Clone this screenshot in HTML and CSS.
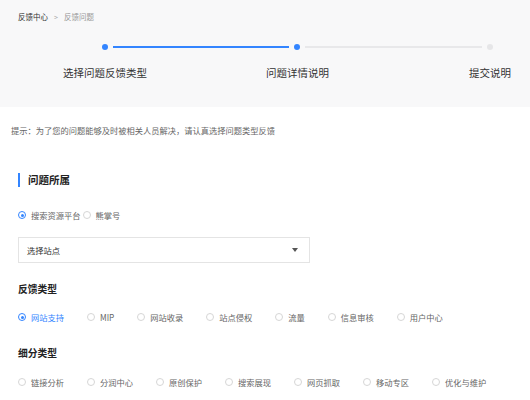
FILE: index.html
```html
<!DOCTYPE html>
<html lang="zh-CN">
<head>
<meta charset="utf-8">
<title>反馈问题</title>
<link rel="stylesheet" href="styles.css">
</head>
<body>
<div class="top">
  <div class="crumbs"><span class="crumb-main">反馈中心</span><span class="crumb-sep">&gt;</span><span class="crumb-cur">反馈问题</span></div>
  <div class="steps">
    <span class="dot dot-on"></span><span class="line line-on"></span><span class="dot dot-on"></span><span class="line"></span><span class="dot"></span>
  </div>
  <div class="step-labels">
    <span>选择问题反馈类型</span><span>问题详情说明</span><span class="step-last">提交说明</span>
  </div>
</div>
<div class="main">
  <div class="hint">提示：为了您的问题能够及时被相关人员解决，请认真选择问题类型反馈</div>
  <div class="section-title">问题所属</div>
  <div class="radios radios-tight">
    <label class="radio checked"><span class="circle"></span>搜索资源平台</label>
    <label class="radio"><span class="circle"></span>熊掌号</label>
  </div>
  <div class="select"><span>选择站点</span><span class="caret"></span></div>
  <div class="sub-title">反馈类型</div>
  <div class="radios">
    <label class="radio checked"><span class="circle"></span>网站支持</label>
    <label class="radio"><span class="circle"></span>MIP</label>
    <label class="radio"><span class="circle"></span>网站收录</label>
    <label class="radio"><span class="circle"></span>站点侵权</label>
    <label class="radio"><span class="circle"></span>流量</label>
    <label class="radio"><span class="circle"></span>信息审核</label>
    <label class="radio"><span class="circle"></span>用户中心</label>
  </div>
  <div class="sub-title sub-title-2">细分类型</div>
  <div class="radios radios-3">
    <label class="radio"><span class="circle"></span>链接分析</label>
    <label class="radio"><span class="circle"></span>分润中心</label>
    <label class="radio"><span class="circle"></span>原创保护</label>
    <label class="radio"><span class="circle"></span>搜索展现</label>
    <label class="radio"><span class="circle"></span>网页抓取</label>
    <label class="radio"><span class="circle"></span>移动专区</label>
    <label class="radio"><span class="circle"></span>优化与维护</label>
  </div>
</div>
</body>
</html>
```
FILE: styles.css
```css
* { box-sizing: border-box; }
html, body { margin: 0; padding: 0; background: #fff; }
body {
  font-family: "Noto Sans CJK SC", "Noto Sans", sans-serif;
  color: #333;
  width: 530px;
  height: 400px;
  overflow: hidden;
}
.top {
  background: #f8f8f9;
  height: 107px;
}
.crumbs {
  height: 34px;
  line-height: 34px;
  padding-left: 18px;
  font-size: 7.5px;
  display: flex;
}
.crumb-main { color: #333; }
.crumb-sep { color: #aaa; margin: 0 6px 0 6px; font-size: 7px; }
.crumb-cur { color: #999; }
.steps {
  margin-top: 10px;
  padding-left: 102px;
  display: flex;
  align-items: center;
  height: 6px;
}
.dot {
  width: 6px;
  height: 6px;
  border-radius: 50%;
  background: #e6e6e8;
  flex: none;
}
.dot-on { background: #3385ff; }
.line {
  width: 177px;
  height: 2px;
  margin: 0 5px;
  background: #e8e8ea;
  flex: none;
}
.line-on { width: 176px; background: #3385ff; }
.step-labels {
  margin-top: 16px;
  margin-left: 9px;
  display: grid;
  grid-template-columns: 192px 193px 1fr;
  font-size: 10.5px;
  line-height: 14px;
  color: #333;
}
.step-labels span { text-align: center; }
.step-labels .step-last { text-align: right; padding-right: 19px; }
.main { padding-left: 18px; }
.hint {
  margin-top: 16px;
  margin-left: -7px;
  font-size: 8.25px;
  line-height: 14px;
  color: #666;
}
.section-title {
  margin-top: 36px;
  font-size: 10.5px;
  line-height: 14px;
  font-weight: bold;
  color: #222;
  border-left: 2px solid #3385ff;
  padding-left: 8px;
}
.radios {
  display: flex;
  margin-top: 15px;
  font-size: 8.25px;
  line-height: 12px;
  color: #666;
}
.radios-tight { margin-top: 22px; }
.radios-3 { margin-top: 16px; }
.radio {
  display: flex;
  align-items: center;
  margin-right: 23px;
  white-space: nowrap;
}
.radio:last-child { margin-right: 0; }
.radios-tight .radio { margin-right: 2px; }
.circle {
  width: 8px;
  height: 8px;
  border: 1px solid #d6d6d6;
  border-radius: 50%;
  margin-right: 5px;
  background: #fff;
  flex: none;
  position: relative;
}
.checked { color: #3385ff; }
.radios-tight .checked { color: #666; }
.checked .circle { border-color: #3385ff; }
.checked .circle::after {
  content: "";
  position: absolute;
  left: 1.5px;
  top: 1.5px;
  width: 3px;
  height: 3px;
  border-radius: 50%;
  background: #3385ff;
}
.select {
  margin-top: 16px;
  width: 292px;
  height: 26px;
  border: 1px solid #e4e4e4;
  display: flex;
  align-items: center;
  justify-content: space-between;
  padding: 0 11px 0 8px;
  font-size: 8.25px;
  color: #333;
}
.caret {
  width: 0;
  height: 0;
  border-left: 3.5px solid transparent;
  border-right: 3.5px solid transparent;
  border-top: 4px solid #555;
}
.sub-title {
  margin-top: 19px;
  font-size: 9.75px;
  line-height: 14px;
  font-weight: bold;
  color: #222;
}
.sub-title-2 { margin-top: 23px; }
```
